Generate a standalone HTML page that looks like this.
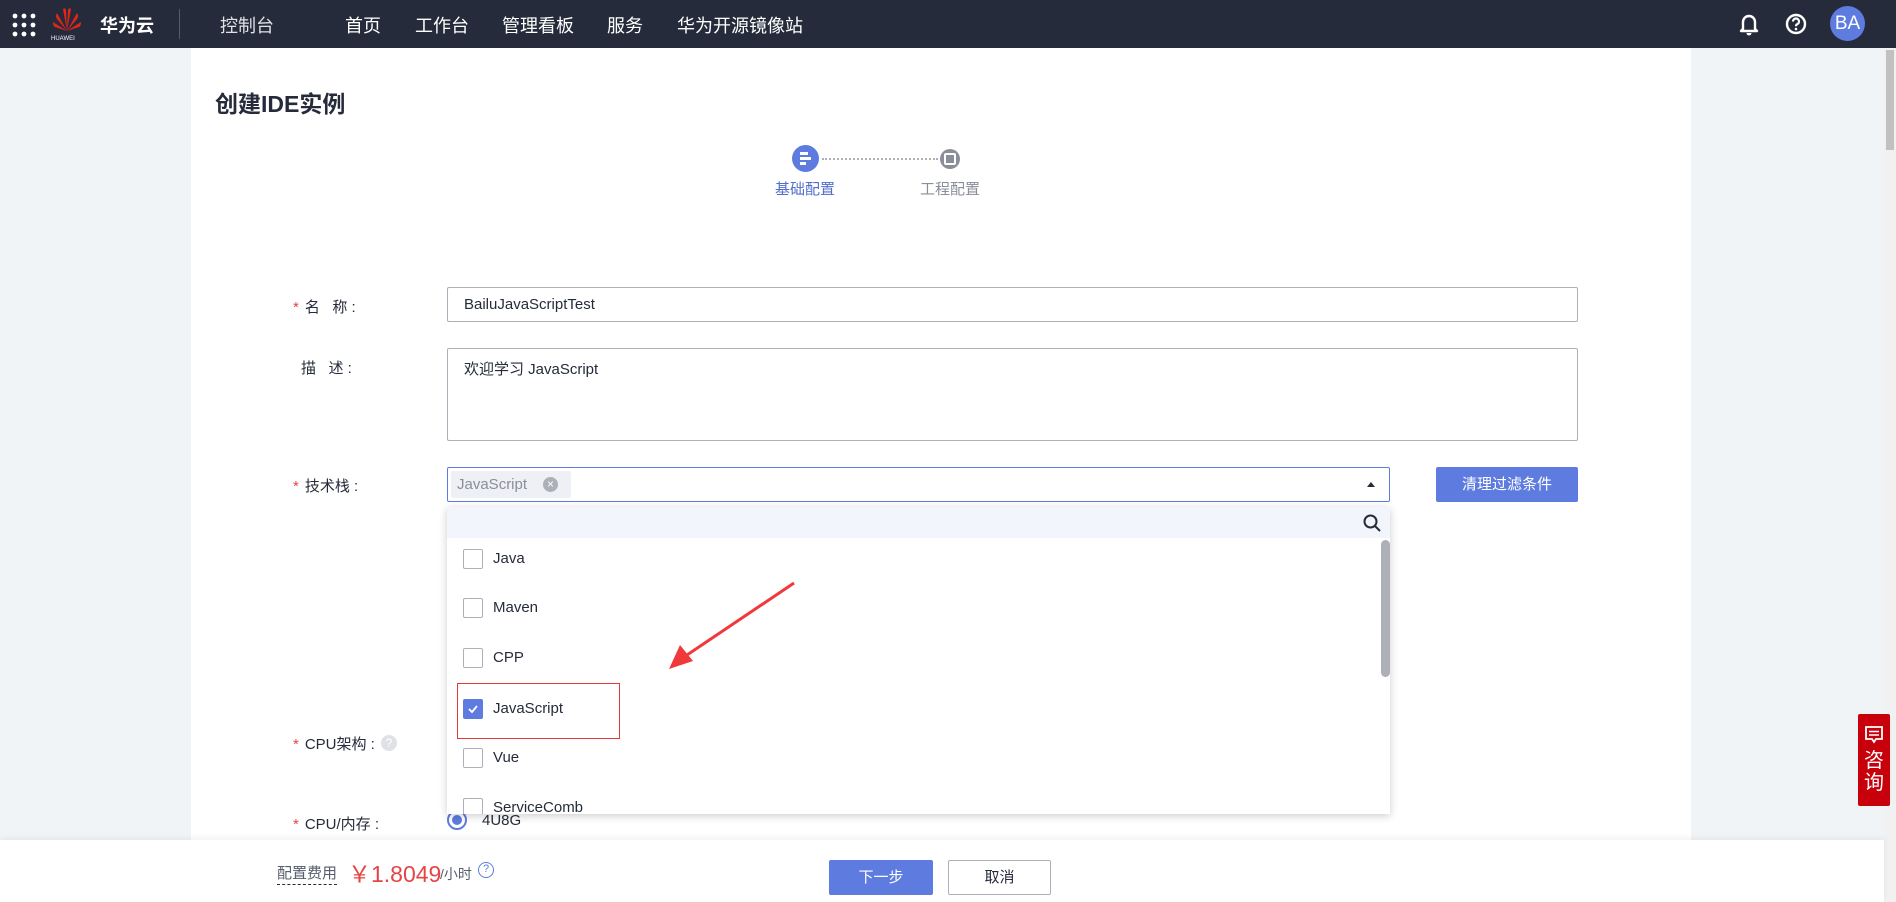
<!DOCTYPE html>
<html><head><meta charset="utf-8"><style>
*{box-sizing:border-box;margin:0;padding:0}
body{width:1896px;height:902px;overflow:hidden;background:#f1f4f7;font-family:"Liberation Sans","Noto Sans CJK SC",sans-serif;color:#252b3a;position:relative;font-size:15px}
.abs{position:absolute}
.nav{left:0;top:0;width:1896px;height:48px;background:#252b3a;color:#fff}
.nav .it{position:absolute;top:12px;font-size:18px;color:#fff}
.card{left:191px;top:48px;width:1500px;height:854px;background:#fff}
.lbl{position:absolute;font-size:15px;color:#252b3a}
.lbl b{color:#e54545;font-weight:normal;margin-right:6px}
.inp{position:absolute;border:1px solid #adb0b8;border-radius:2px;background:#fff}
.cb{position:absolute;left:16px;width:20px;height:20px;border:1px solid #adb0b8;border-radius:2px;background:#fff}
.opt{position:absolute;left:0;width:100%;height:20px}
.opt span{position:absolute;left:46px;top:0;font-size:15px;color:#252b3a;line-height:20px}
</style></head><body>
<div class="abs nav">
  <svg class="abs" style="left:12px;top:13px" width="24" height="24"><g fill="#fff"><circle cx="3" cy="3" r="2.4"/><circle cx="12" cy="3" r="2.4"/><circle cx="21" cy="3" r="2.4"/><circle cx="3" cy="12" r="2.4"/><circle cx="12" cy="12" r="2.4"/><circle cx="21" cy="12" r="2.4"/><circle cx="3" cy="21" r="2.4"/><circle cx="12" cy="21" r="2.4"/><circle cx="21" cy="21" r="2.4"/></g></svg>
  <svg class="abs" style="left:52px;top:7px" width="30" height="26" viewBox="0 0 30 26"><g fill="#e0261b"><path d="M15 24 L11 2 Q13 0 14 3Z"/><path d="M15 24 L19 2 Q17 0 16 3Z"/><path d="M15 24 L5 6 Q3 9 5 12Z"/><path d="M15 24 L25 6 Q27 9 25 12Z"/><path d="M15 24 L1 15 Q1 19 3 20Z"/><path d="M15 24 L29 15 Q29 19 27 20Z"/></g></svg>
  <div class="abs" style="left:51px;top:36px;font-size:6px;color:#fff">HUAWEI</div>
  <div class="it" style="left:100px;font-weight:bold">华为云</div>
  <div class="abs" style="left:179px;top:9px;width:1px;height:30px;background:#555b6a"></div>
  <div class="it" style="left:220px;color:#dfe1e6">控制台</div>
  <div class="it" style="left:345px">首页</div>
  <div class="it" style="left:415px">工作台</div>
  <div class="it" style="left:502px">管理看板</div>
  <div class="it" style="left:607px">服务</div>
  <div class="it" style="left:677px">华为开源镜像站</div>
  <svg class="abs" style="left:1738px;top:12px" width="22" height="24" viewBox="0 0 22 24"><path d="M5 17V10a6 6 0 0 1 12 0v7l2 2H3z" fill="none" stroke="#fff" stroke-width="2.4" stroke-linejoin="round"/><path d="M8.5 21a2.5 2.5 0 0 0 5 0" fill="#fff"/></svg>
  <svg class="abs" style="left:1784px;top:12px" width="24" height="24" viewBox="0 0 24 24"><circle cx="12" cy="12" r="9" fill="none" stroke="#fff" stroke-width="2.4"/><path d="M9 9.5a3 3 0 1 1 4 2.8c-1 .4-1 1-1 2" fill="none" stroke="#fff" stroke-width="2.2"/><circle cx="12" cy="17" r="1.3" fill="#fff"/></svg>
  <div class="abs" style="left:1830px;top:6px;width:35px;height:35px;border-radius:50%;background:#5e7ce0;color:#fff;font-size:19px;text-align:center;line-height:35px">BA</div>
</div>
<div class="abs" style="left:1884px;top:48px;width:12px;height:854px;background:#f1f1f1"></div>
<div class="abs" style="left:1886px;top:50px;width:8px;height:100px;background:#c1c1c1"></div>
<div class="abs card"></div>
<div class="abs" style="left:215px;top:85px;font-size:23px;font-weight:bold">创建IDE实例</div>
<!-- steps -->
<div class="abs" style="left:792px;top:145px;width:27px;height:27px;border-radius:50%;background:#5e7ce0"></div>
<div class="abs" style="left:800px;top:152px;width:8px;height:2.5px;background:#fff"></div>
<div class="abs" style="left:800px;top:157px;width:11px;height:2.5px;background:#fff"></div>
<div class="abs" style="left:800px;top:162px;width:6px;height:2.5px;background:#fff"></div>
<div class="abs" style="left:822px;top:158px;width:116px;border-top:2px dotted #adb0b8"></div>
<div class="abs" style="left:940px;top:149px;width:20px;height:20px;border-radius:50%;background:#8a8e99"></div>
<div class="abs" style="left:944px;top:153px;width:12px;height:12px;border:2px solid #fff;border-radius:2px"></div>
<div class="abs" style="left:775px;top:178px;font-size:15px;color:#526ecc">基础配置</div>
<div class="abs" style="left:920px;top:178px;font-size:15px;color:#8a8e99">工程配置</div>
<!-- form -->
<div class="lbl" style="left:293px;top:296px"><b>*</b>名&nbsp;&nbsp;&nbsp;称 :</div>
<div class="inp" style="left:447px;top:287px;width:1131px;height:35px"></div>
<div class="abs" style="left:464px;top:296px;font-size:15px">BailuJavaScriptTest</div>
<div class="lbl" style="left:301px;top:357px">描&nbsp;&nbsp;&nbsp;述 :</div>
<div class="inp" style="left:447px;top:348px;width:1131px;height:93px"></div>
<div class="abs" style="left:464px;top:358px;font-size:15px">欢迎学习 JavaScript</div>
<div class="lbl" style="left:293px;top:475px"><b>*</b>技术栈 :</div>
<div class="inp" style="left:447px;top:467px;width:943px;height:35px;border-color:#5e7ce0"></div>
<div class="abs" style="left:451px;top:471px;width:120px;height:27px;background:#eef0f5;border-radius:2px"></div>
<div class="abs" style="left:457px;top:476px;font-size:15px;color:#8a8e99">JavaScript</div>
<div class="abs" style="left:543px;top:477px;width:15px;height:15px;border-radius:50%;background:#adb0b8;color:#fff;font-size:12px;line-height:15px;text-align:center">×</div>
<div class="abs" style="left:1367px;top:482px;width:0;height:0;border-left:4px solid transparent;border-right:4px solid transparent;border-bottom:5px solid #252b3a"></div>
<div class="abs" style="left:1436px;top:467px;width:142px;height:35px;background:#5e7ce0;border-radius:2px;color:#fff;font-size:15px;text-align:center;line-height:35px">清理过滤条件</div>
<div class="lbl" style="left:293px;top:733px"><b>*</b>CPU架构 :</div>
<div class="abs" style="left:381px;top:735px;width:16px;height:16px;border-radius:50%;background:#dfe1e6;color:#fff;font-size:12px;text-align:center;line-height:16px">?</div>
<div class="lbl" style="left:293px;top:813px"><b>*</b>CPU/内存 :</div>
<div class="abs" style="left:447px;top:810px;width:20px;height:20px;border-radius:50%;border:2px solid #5e7ce0;background:#fff"></div>
<div class="abs" style="left:452px;top:815px;width:10px;height:10px;border-radius:50%;background:#5e7ce0"></div>
<div class="abs" style="left:482px;top:812px;font-size:15px">4U8G</div>
<!-- dropdown -->
<div class="abs" style="left:447px;top:507px;width:943px;height:307px;background:#fff;box-shadow:0 2px 8px rgba(0,0,0,.2);overflow:hidden">
  <div class="abs" style="left:0;top:0;width:943px;height:31px;background:#f2f5fc"></div>
  <svg class="abs" style="left:915px;top:6px" width="20" height="20" viewBox="0 0 20 20"><circle cx="8.5" cy="8.5" r="6" fill="none" stroke="#252b3a" stroke-width="2"/><path d="M13 13l5 5" stroke="#252b3a" stroke-width="2"/></svg>
  <div class="abs" style="left:934px;top:33px;width:9px;height:274px;background:#fff"></div>
  <div class="abs" style="left:934px;top:33px;width:9px;height:137px;border-radius:5px;background:#adb0b8"></div>
  <div class="opt" style="top:42px"><div class="cb" style="left:16px"></div><span>Java</span></div>
  <div class="opt" style="top:91px"><div class="cb"></div><span>Maven</span></div>
  <div class="opt" style="top:141px"><div class="cb"></div><span>CPP</span></div>
  <div class="opt" style="top:192px"><div class="cb" style="background:#5e7ce0;border-color:#5e7ce0"><svg width="18" height="18" viewBox="0 0 18 18"><path d="M5 9l3 3 5-6" fill="none" stroke="#fff" stroke-width="1.8"/></svg></div><span>JavaScript</span></div>
  <div class="opt" style="top:241px"><div class="cb"></div><span>Vue</span></div>
  <div class="opt" style="top:291px"><div class="cb"></div><span>ServiceComb</span></div>
</div>
<div class="abs" style="left:457px;top:683px;width:163px;height:56px;border:1.5px solid #e53935"></div>
<svg class="abs" style="left:0;top:0" width="1896" height="902"><path d="M794 583 L684 657" stroke="#f0393a" stroke-width="3"/><path d="M669 669 L680 645 L693 661 Z" fill="#f0393a"/></svg>
<!-- footer -->
<div class="abs" style="left:0;top:840px;width:1884px;height:62px;background:#fff;box-shadow:0 -2px 6px rgba(0,0,0,.06)"></div>
<div class="abs" style="left:277px;top:862px;font-size:15px;color:#575d6c;border-bottom:1.5px dashed #252b3a;padding-bottom:1px">配置费用</div>
<div class="abs" style="left:348px;top:855px;font-size:23px;color:#e54545">￥1.8049</div>
<div class="abs" style="left:440px;top:864px;font-size:14px;color:#575d6c">/小时</div>
<div class="abs" style="left:478px;top:862px;width:16px;height:16px;border-radius:50%;border:1.5px solid #5e7ce0;color:#5e7ce0;font-size:11px;text-align:center;line-height:13px">?</div>
<div class="abs" style="left:829px;top:860px;width:104px;height:35px;background:#5e7ce0;border-radius:2px;color:#fff;font-size:15px;text-align:center;line-height:35px">下一步</div>
<div class="abs" style="left:948px;top:860px;width:103px;height:35px;background:#fff;border:1px solid #adb0b8;border-radius:2px;font-size:15px;text-align:center;line-height:33px">取消</div>
<!-- consult -->
<div class="abs" style="left:1858px;top:714px;width:32px;height:92px;background:#c7000b;border-radius:2px"></div>
<svg class="abs" style="left:1863px;top:724px" width="22" height="22" viewBox="0 0 22 22"><path d="M3 3h16v12h-6l-2 3-2-3H3z" fill="none" stroke="#fff" stroke-width="1.8"/><path d="M6 7.5h10M6 11h10" stroke="#fff" stroke-width="1.6"/></svg>
<div class="abs" style="left:1864px;top:750px;font-size:20px;color:#fff;line-height:22px;width:22px">咨询</div>
</body></html>
